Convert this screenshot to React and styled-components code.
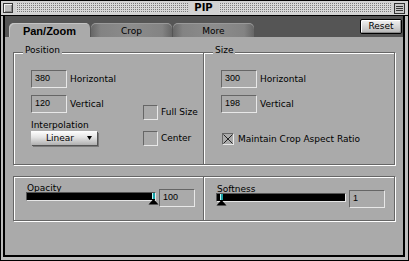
import React from 'react';
import styled, { createGlobalStyle } from 'styled-components';

const Global = createGlobalStyle`
  html, body { margin: 0; padding: 0; background: #ffffff; }
  body { font-family: "DejaVu Sans", Verdana, sans-serif; font-size: 9px; color: #000; }
  * { box-sizing: border-box; }
`;

const Window = styled.div`
  width: 409px;
  height: 261px;
  border: 1px solid #000;
  background: #bcbcbc;
  display: flex;
  flex-direction: column;
`;

const TitleBar = styled.div`
  height: 15px;
  flex: none;
  border-bottom: 1px solid #000;
  background: #d2d2d2;
  display: flex;
  align-items: center;
  padding: 0 3px 0 2px;
  gap: 3px;
`;

const CloseBox = styled.div`
  width: 10px;
  height: 10px;
  border: 1px solid #3a3a3a;
  background: #bdbdbd;
  box-shadow: inset 1px 1px 0 #f4f4f4, inset -1px -1px 0 #8a8a8a;
`;

const Stripes = styled.div`
  flex: 1;
  height: 10px;
  background: conic-gradient(#7c7c7c 0 25%, transparent 0) 0 0 / 2px 2px, #d8d8d8;
`;

const Title = styled.div`
  font-family: "DejaVu Sans", sans-serif;
  font-weight: bold;
  font-size: 10px;
  line-height: 12px;
  padding: 0 3px;
`;

const ShadeBox = styled.svg`
  width: 11px;
  height: 11px;
  display: block;
`;

const Body = styled.div`
  flex: 1;
  display: flex;
  padding: 0 3px 3px 2px;
  min-height: 0;
`;

const Inner = styled.div`
  flex: 1;
  border: 2px solid #000;
  border-top: none;
  display: flex;
  flex-direction: column;
`;

const TabBar = styled.div`
  height: 21px;
  flex: none;
  background: #555555;
  display: flex;
  align-items: flex-end;
  padding-left: 4px;
  gap: 1px;
`;

const Tab = styled.div`
  width: 81px;
  height: 14px;
  border-radius: 5px 5px 0 0;
  display: flex;
  align-items: center;
  justify-content: center;
  font-family: ${p => (p.$active ? '"Liberation Sans", Arial, sans-serif' : '"DejaVu Sans", sans-serif')};
  font-weight: ${p => (p.$active ? 'bold' : 'normal')};
  font-size: ${p => (p.$active ? '11px' : '9px')};
  padding-top: 1px;
  background: ${p =>
    p.$active
      ? '#aaaaaa'
      : 'linear-gradient(90deg, #666 0, #838383 12%, #8c8c8c 50%, #838383 88%, #666 100%)'};
  box-shadow: ${p => (p.$active ? 'inset 1px 1px 0 #c4c4c4' : 'inset 0 1px 0 #9a9a9a')};
`;

const ResetButton = styled.div`
  margin-left: auto;
  margin-right: 1px;
  align-self: flex-start;
  margin-top: 3px;
  width: 42px;
  height: 15px;
  border: 1px solid #000;
  border-radius: 2px;
  background: linear-gradient(#f2f2f2, #d0d0d0 60%, #b4b4b4);
  box-shadow: inset 1px 1px 0 #fff, inset -1px -1px 0 #8a8a8a;
  display: flex;
  align-items: center;
  justify-content: center;
  font-size: 9px;
  line-height: 11px;
`;

const Content = styled.div`
  flex: 1;
  background: #aaaaaa;
  padding: 15px 8px 0 8px;
`;

const Panel = styled.div`
  height: ${p => p.$h}px;
  margin-top: ${p => p.$mt || 0}px;
  border: 1px solid #666666;
  box-shadow: inset 1px 1px 0 #ffffff, 1px 1px 0 #ffffff;
  display: grid;
  grid-template-columns: 190px 190px;
`;

const Column = styled.div`
  position: relative;
  padding: ${p => p.$pad};
  border-right: ${p => (p.$divider ? '1px solid #666666' : 'none')};
  box-shadow: ${p => (p.$divider ? '1px 0 0 #ffffff' : 'none')};
`;

const Legend = styled.div`
  position: absolute;
  top: -8px;
  left: 9px;
  padding: 0 2px;
  background: #aaaaaa;
  line-height: 11px;
`;

const FieldRows = styled.div`
  display: flex;
  flex-direction: column;
  gap: 7px;
`;

const FieldRow = styled.div`
  display: flex;
  align-items: center;
  gap: 3px;
`;

const Field = styled.div`
  width: 36px;
  height: 18px;
  flex: none;
  border-top: 1px solid #666;
  border-left: 1px solid #666;
  border-bottom: 1px solid #e8e8e8;
  border-right: 1px solid #e8e8e8;
  margin-top: ${p => p.$mt || 0}px;
  padding: 1px 0 0 3px;
  font-family: "Liberation Sans", Arial, sans-serif;
  font-size: 9px;
  line-height: 13px;
`;

const Label = styled.span`
  line-height: 11px;
  white-space: nowrap;
`;

const LeftGrid = styled.div`
  display: grid;
  grid-template-columns: 112px auto;
`;

const ColA = styled.div`
  display: flex;
  flex-direction: column;
`;

const InterpLabel = styled.div`
  margin-top: 7px;
  line-height: 11px;
`;

const Popup = styled.div`
  width: 66px;
  height: 14px;
  background: linear-gradient(#ffffff, #e4e4e4 45%, #b0b0b0);
  box-shadow: 1px 1px 0 #555, 2px 2px 0 #7a7a7a;
  display: flex;
  align-items: center;
  padding: 0 5px 0 15px;
  font-size: 9px;
  line-height: 11px;
`;

const PopupText = styled.span`
  flex: 1;
`;

const ChecksCol = styled.div`
  margin-top: 35px;
  display: flex;
  flex-direction: column;
  gap: 11px;
`;

const CheckRow = styled.div`
  display: flex;
  align-items: center;
  gap: ${p => p.$gap || 3}px;
  margin-top: ${p => p.$mt || 0}px;
  margin-left: ${p => p.$ml || 0}px;
`;

const CheckBox = styled.div`
  width: ${p => p.$size}px;
  height: ${p => p.$size}px;
  flex: none;
  border-top: 1px solid #666;
  border-left: 1px solid #666;
  border-bottom: 1px solid #e8e8e8;
  border-right: 1px solid #e8e8e8;
  display: flex;
`;

const SliderBlock = styled.div`
  display: flex;
  align-items: flex-start;
  gap: 3px;
`;

const SliderCol = styled.div`
  display: flex;
  flex-direction: column;
`;

const SliderLabel = styled.div`
  line-height: 8px;
  height: 8px;
  padding-left: 1px;
`;

const Track = styled.div`
  position: relative;
  width: 130px;
  height: 9px;
  background: #000;
  border-top: 1px solid #555;
  border-left: 1px solid #555;
  border-bottom: 1px solid #e6e6e6;
  border-right: 1px solid #e6e6e6;
`;

const Thumb = styled.svg`
  position: absolute;
  top: 0;
  width: 11px;
  height: 12px;
  overflow: visible;
`;

function Slider({ label, value }) {
  const center = 3.5 + value * 1.23;
  return (
    <SliderBlock>
      <SliderCol>
        <SliderLabel>{label}</SliderLabel>
        <Track>
          <Thumb viewBox="0 0 11 12" style={{ left: center - 5.5 }}>
            <rect x="4" y="0" width="1" height="6" fill="#bff4f4" />
            <rect x="5" y="0" width="2" height="6" fill="#17a3a8" />
            <polygon points="5.5,6 0.5,11.5 10.5,11.5" fill="#000" />
          </Thumb>
        </Track>
      </SliderCol>
      <Field $mt={5}>{value}</Field>
    </SliderBlock>
  );
}

export default function App() {
  return (
    <>
      <Global />
      <Window>
        <TitleBar>
          <CloseBox />
          <Stripes />
          <Title>PIP</Title>
          <Stripes />
          <ShadeBox viewBox="0 0 11 11">
            <rect x="0.5" y="0.5" width="10" height="10" fill="#c8c8c8" stroke="#333" />
            <line x1="2" y1="3.5" x2="9" y2="3.5" stroke="#333" />
            <line x1="2" y1="5.5" x2="9" y2="5.5" stroke="#333" />
            <line x1="2" y1="7.5" x2="9" y2="7.5" stroke="#333" />
          </ShadeBox>
        </TitleBar>
        <Body>
          <Inner>
            <TabBar>
              <Tab $active>Pan/Zoom</Tab>
              <Tab>Crop</Tab>
              <Tab>More</Tab>
              <ResetButton>Reset</ResetButton>
            </TabBar>
            <Content>
              <Panel $h={113}>
                <Column $divider $pad="17px 0 0 17px">
                  <Legend>Position</Legend>
                  <LeftGrid>
                    <ColA>
                      <FieldRows>
                        <FieldRow>
                          <Field>380</Field>
                          <Label>Horizontal</Label>
                        </FieldRow>
                        <FieldRow>
                          <Field>120</Field>
                          <Label>Vertical</Label>
                        </FieldRow>
                      </FieldRows>
                      <InterpLabel>Interpolation</InterpLabel>
                      <Popup>
                        <PopupText>Linear</PopupText>
                        <svg width="5" height="4" viewBox="0 0 5 4">
                          <polygon points="0,0 5,0 2.5,4" fill="#000" />
                        </svg>
                      </Popup>
                    </ColA>
                    <ChecksCol>
                      <CheckRow>
                        <CheckBox $size={15} />
                        <Label>Full Size</Label>
                      </CheckRow>
                      <CheckRow>
                        <CheckBox $size={15} />
                        <Label>Center</Label>
                      </CheckRow>
                    </ChecksCol>
                  </LeftGrid>
                </Column>
                <Column $pad="17px 0 0 17px">
                  <Legend>Size</Legend>
                  <FieldRows>
                    <FieldRow>
                      <Field>300</Field>
                      <Label>Horizontal</Label>
                    </FieldRow>
                    <FieldRow>
                      <Field>198</Field>
                      <Label>Vertical</Label>
                    </FieldRow>
                  </FieldRows>
                  <CheckRow $mt={20} $ml={1} $gap={4}>
                    <CheckBox $size={12}>
                      <svg width="10" height="10" viewBox="0 0 10 10">
                        <line x1="0.5" y1="0.5" x2="9.5" y2="9.5" stroke="#222" />
                        <line x1="9.5" y1="0.5" x2="0.5" y2="9.5" stroke="#222" />
                      </svg>
                    </CheckBox>
                    <Label>Maintain Crop Aspect Ratio</Label>
                  </CheckRow>
                </Column>
              </Panel>
              <Panel $h={45} $mt={11}>
                <Column $divider $pad="7px 0 0 12px">
                  <Slider label="Opacity" value={100} />
                </Column>
                <Column $pad="8px 0 0 12px">
                  <Slider label="Softness" value={1} />
                </Column>
              </Panel>
            </Content>
          </Inner>
        </Body>
      </Window>
    </>
  );
}
